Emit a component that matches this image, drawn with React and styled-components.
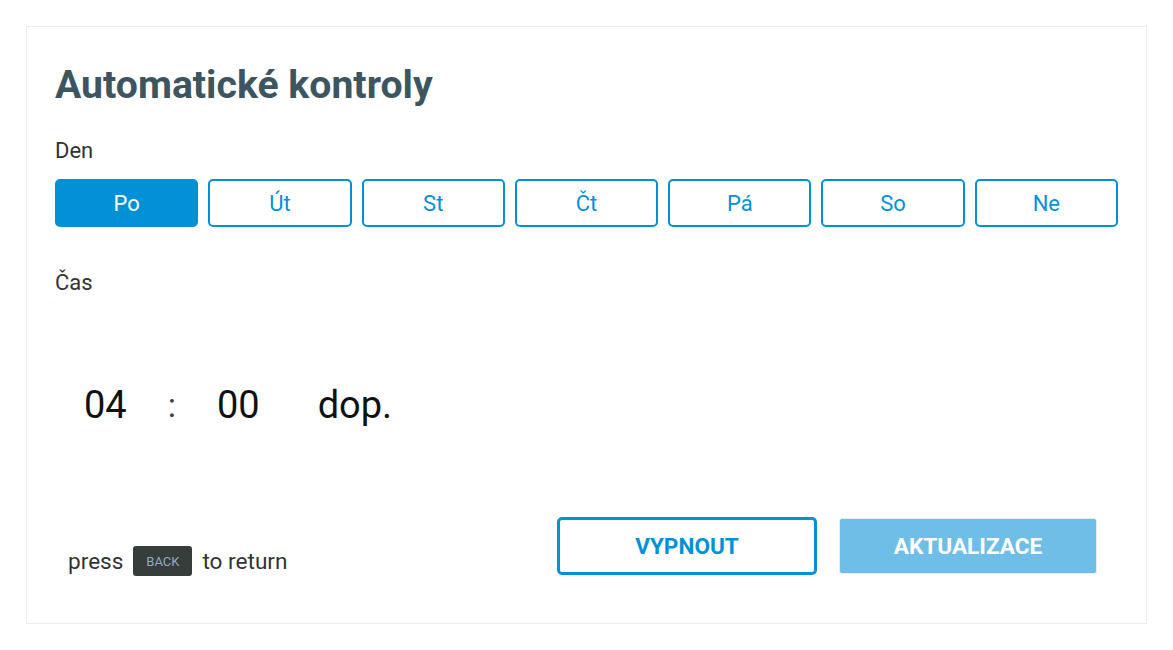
import React from 'react'
import styled, { createGlobalStyle } from 'styled-components'

const Global = createGlobalStyle`
  html, body {
    margin: 0;
    padding: 0;
    background: #ffffff;
    font-family: Roboto, "Liberation Sans", Arial, sans-serif;
  }
`

const days = ['Po', 'Út', 'St', 'Čt', 'Pá', 'So', 'Ne']

const App = () => {
  return (
    <>
      <Global />
      <Page>
        <Card>
          <Title>Automatické kontroly</Title>
          <Label>Den</Label>
          <Days>
            {days.map((d, i) => (
              <Day key={d} active={i === 0}>{d}</Day>
            ))}
          </Days>
          <Label $gap>Čas</Label>
          <Time>
            <Hour>04</Hour>
            <Colon>:</Colon>
            <Minute>00</Minute>
            <Period>dop.</Period>
          </Time>
          <Footer>
            <Hint>
              press <BackKey>BACK</BackKey> to return
            </Hint>
            <Actions>
              <Outline>VYPNOUT</Outline>
              <Filled>AKTUALIZACE</Filled>
            </Actions>
          </Footer>
        </Card>
      </Page>
    </>
  )
}

const Page = styled.div`
  padding: 26px 26px 0 26px;
`

const Card = styled.div`
  box-sizing: border-box;
  width: 1121px;
  height: 598px;
  border: 1px solid #ededed;
  padding: 0 28px;
  display: flex;
  flex-direction: column;
`

const Title = styled.h1`
  margin: 34px 0 0 0;
  font-size: 39.2px;
  line-height: 48px;
  font-weight: 700;
  color: #3d555f;
`

const Label = styled.div`
  margin-top: ${p => (p.$gap ? '42px' : '28px')};
  font-size: 22px;
  line-height: 28px;
  color: #333333;
`

const Days = styled.div`
  display: flex;
  gap: 10px;
  margin-top: 14px;
`

const Day = styled.div.withConfig({ shouldForwardProp: p => p !== 'active' })`
  box-sizing: border-box;
  flex: 1;
  height: 48px;
  border: 2.5px solid #0291d6;
  border-radius: 5px;
  display: flex;
  align-items: center;
  justify-content: center;
  font-size: 22px;
  color: ${p => (p.active ? '#ffffff' : '#0291d6')};
  background: ${p => (p.active ? '#0291d6' : '#ffffff')};
`

const Time = styled.div`
  display: flex;
  align-items: center;
  margin-top: 85px;
  padding-left: 29px;
  font-size: 38px;
  line-height: 46px;
  color: #111111;
`

const Hour = styled.span``

const Colon = styled.span`
  margin-left: 41px;
  font-size: 34px;
  color: #444;
`

const Minute = styled.span`
  margin-left: 41px;
`

const Period = styled.span`
  margin-left: 58px;
`

const Footer = styled.div`
  display: flex;
  align-items: flex-end;
  justify-content: space-between;
  margin-top: 89px;
  padding: 0 21px 0 13px;
`

const Hint = styled.div`
  display: flex;
  align-items: center;
  gap: 10px;
  margin-bottom: -1px;
  font-size: 22.6px;
  color: #333;
`

const BackKey = styled.span`
  display: inline-flex;
  align-items: center;
  justify-content: center;
  width: 59px;
  height: 30px;
  background: #373d3b;
  border-radius: 3px;
  font-size: 13px;
  color: #8eabc4;
`

const Actions = styled.div`
  display: flex;
  gap: 22px;
  align-items: center;
`

const Outline = styled.div`
  box-sizing: border-box;
  width: 260px;
  height: 58px;
  border: 3px solid #0291d6;
  border-radius: 5px;
  display: flex;
  align-items: center;
  justify-content: center;
  font-size: 22.6px;
  font-weight: 700;
  color: #0291d6;
`

const Filled = styled.div`
  box-sizing: border-box;
  width: 258px;
  height: 56px;
  background: #6fbee8;
  border: 1px solid #e3eef4;
  border-radius: 3px;
  display: flex;
  align-items: center;
  justify-content: center;
  font-size: 22.6px;
  font-weight: 700;
  color: #ffffff;
`

export default App
